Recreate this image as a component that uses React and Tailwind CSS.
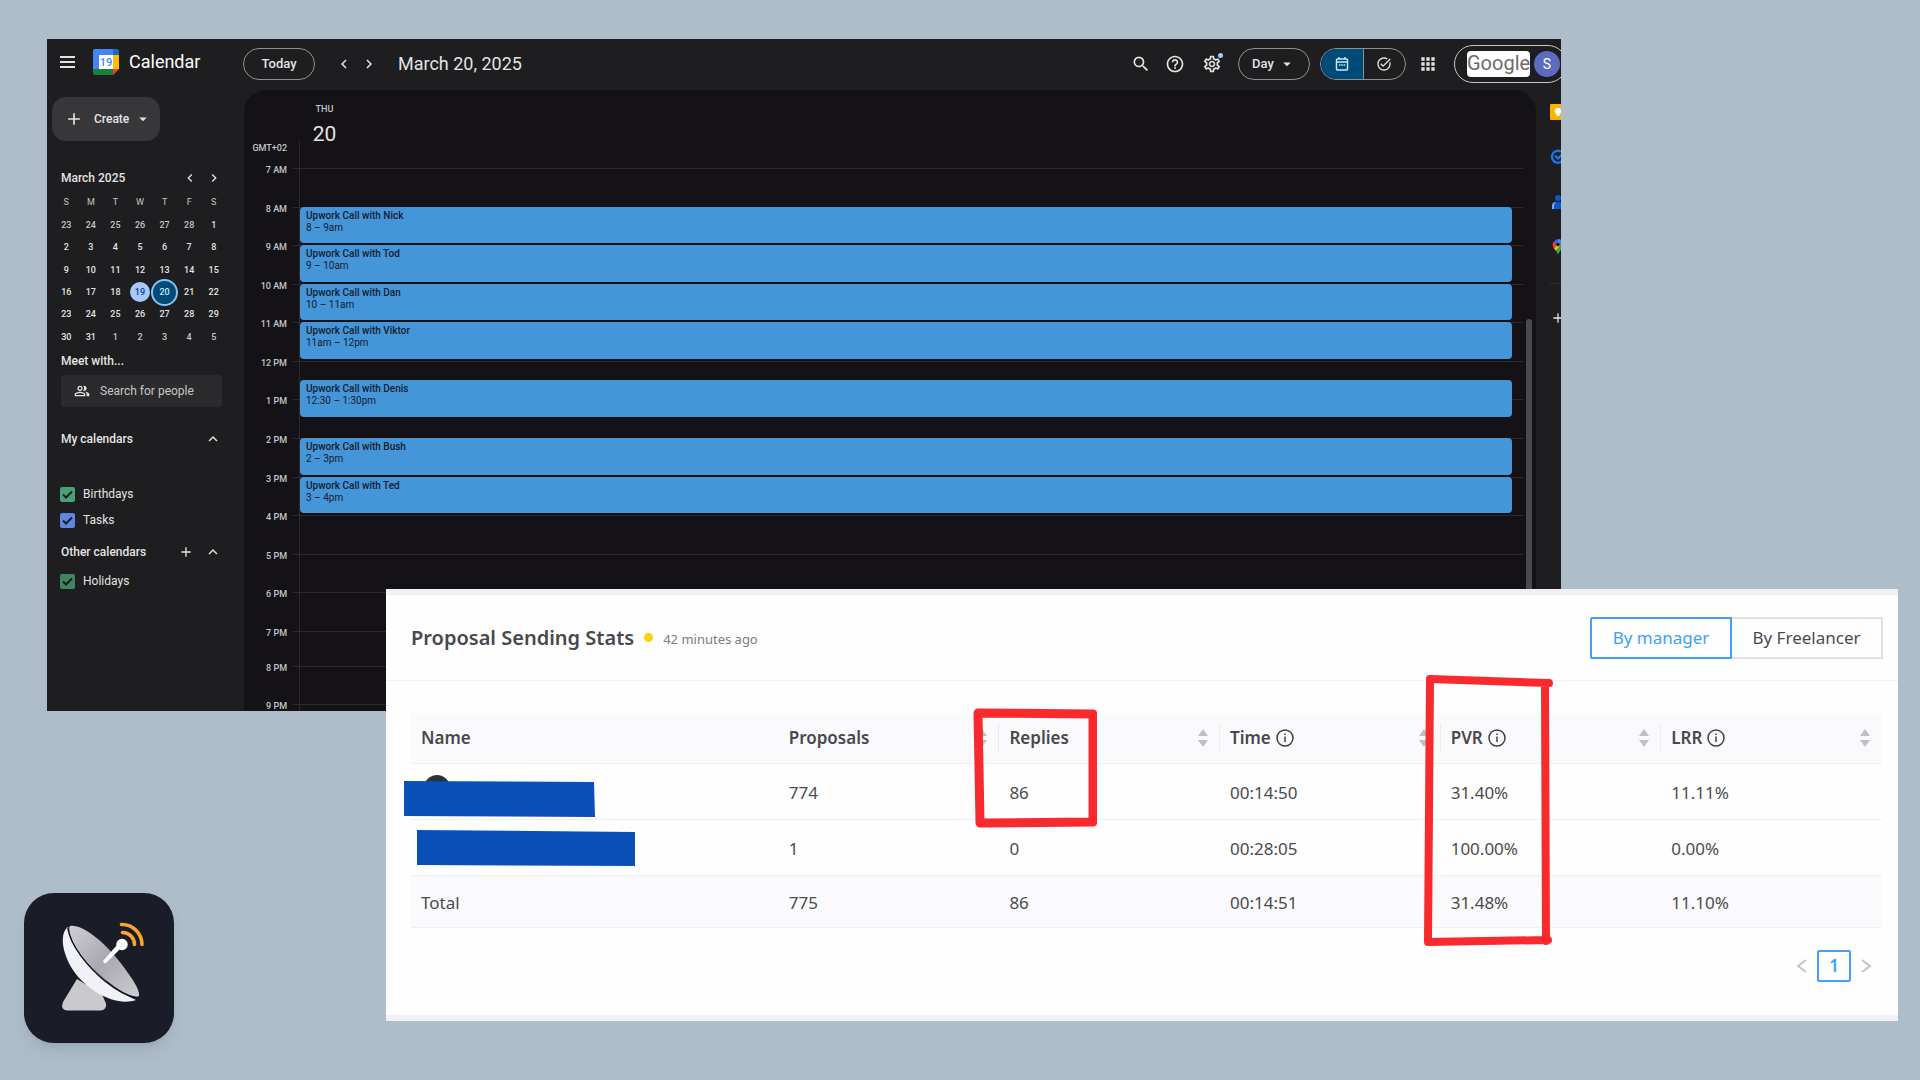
import { useState } from "react";
import {
  MdSearch,
  MdHelpOutline,
  MdOutlineSettings,
  MdApps,
  MdArrowDropDown,
  MdChevronLeft,
  MdChevronRight,
  MdExpandLess,
  MdAdd,
  MdOutlinePeopleAlt,
  MdTaskAlt,
} from "react-icons/md";

const weekdays = ["S", "M", "T", "W", "T", "F", "S"];

const days = [
  23, 24, 25, 26, 27, 28, 1,
  2, 3, 4, 5, 6, 7, 8,
  9, 10, 11, 12, 13, 14, 15,
  16, 17, 18, 19, 20, 21, 22,
  23, 24, 25, 26, 27, 28, 29,
  30, 31, 1, 2, 3, 4, 5,
];

const hours = ["7 AM", "8 AM", "9 AM", "10 AM", "11 AM", "12 PM", "1 PM", "2 PM", "3 PM", "4 PM", "5 PM", "6 PM"];

// slot = half-hour rows after 7 AM
const events = [
  { title: "Upwork Call with Nick", time: "8 – 9am", slot: "row-[3/span_2]" },
  { title: "Upwork Call with Tod", time: "9 – 10am", slot: "row-[5/span_2]" },
  { title: "Upwork Call with Dan", time: "10 – 11am", slot: "row-[7/span_2]" },
  { title: "Upwork Call with Viktor", time: "11am – 12pm", slot: "row-[9/span_2]" },
  { title: "Upwork Call with Denis", time: "12:30 – 1:30pm", slot: "row-[12/span_2]" },
  { title: "Upwork Call with Bush", time: "2 – 3pm", slot: "row-[15/span_2]" },
  { title: "Upwork Call with Ted", time: "3 – 4pm", slot: "row-[17/span_2]" },
];

const stats = [
  { proposals: "774", replies: "86", time: "00:14:50", pvr: "31.40%", lrr: "11.11%" },
  { proposals: "1", replies: "0", time: "00:28:05", pvr: "100.00%", lrr: "0.00%" },
];

function CalendarLogo() {
  return (
    <svg viewBox="0 0 26 26" className="w-[26px] h-[26px]">
      <path d="M2 0h18v6H6v14H0V2a2 2 0 0 1 2-2z" fill="#4285f4" />
      <path d="M20 0h4a2 2 0 0 1 2 2v4h-6z" fill="#1967d2" />
      <path d="M20 6h6v14h-6z" fill="#fbbc04" />
      <path d="M0 20h20v6H2a2 2 0 0 1-2-2z" fill="#188038" />
      <path d="M20 20h6l-6 6z" fill="#ea4335" />
      <path d="M6 6h14v14H6z" fill="#fff" />
      <text x="13" y="17" textAnchor="middle" fontSize="11" fontWeight="500" fill="#4285f4">19</text>
    </svg>
  );
}

function Header() {
  return (
    <header className="h-[49px] mb-[2px] flex items-center text-[#e3e3e3]">
      <div className="w-[196px] flex items-center pl-[13px] pb-1 shrink-0">
        <button aria-label="Main menu" className="w-[15px] flex flex-col gap-[3px]">
          <span className="h-[2px] bg-[#e3e3e3]" />
          <span className="h-[2px] bg-[#e3e3e3]" />
          <span className="h-[2px] bg-[#e3e3e3]" />
        </button>
        <div className="flex items-center gap-[10px] ml-[18px]">
          <CalendarLogo />
          <h1 className="text-[18px] leading-6 text-white">Calendar</h1>
        </div>
      </div>
      <button className="w-[72px] h-8 rounded-full border border-[#8e918f] text-[13px] font-medium shrink-0">Today</button>
      <button aria-label="Previous day" className="ml-5"><MdChevronLeft className="w-[18px] h-[18px]" /></button>
      <button aria-label="Next day" className="ml-[7px]"><MdChevronRight className="w-[18px] h-[18px]" /></button>
      <h2 className="ml-5 text-[18px] leading-6">March 20, 2025</h2>

      <div className="ml-auto flex items-center shrink-0">
        <button aria-label="Search"><MdSearch className="w-5 h-5" /></button>
        <button aria-label="Support" className="ml-[14px]"><MdHelpOutline className="w-5 h-5" /></button>
        <button aria-label="Settings" className="relative ml-[17px]">
          <MdOutlineSettings className="w-5 h-5" />
          <span className="absolute -top-px -right-px w-[5px] h-[5px] rounded-full bg-[#a8c7fa]" />
        </button>
        <button className="ml-4 w-[72px] h-8 rounded-full border border-[#8e918f] text-[13px] font-medium flex items-center justify-center gap-1">
          Day
          <MdArrowDropDown className="w-[18px] h-[18px]" />
        </button>
        <div className="ml-[10px] w-[86px] h-8 rounded-full border border-[#8e918f] flex overflow-hidden">
          <button aria-label="Calendar view" className="flex-1 flex items-center justify-center bg-[#004a77] text-[#c2e7ff] border-r border-[#8e918f]">
            <svg viewBox="0 0 16 16" className="w-4 h-4" fill="none" stroke="currentColor" strokeWidth="1.5">
              <rect x="2.5" y="3" width="11" height="11" rx="1" />
              <path d="M2.5 6h11M5 1v2M11 1v2" />
              <path d="M5 9h1.5M7.3 9h1.5M9.6 9h1.5" />
            </svg>
          </button>
          <button aria-label="Tasks view" className="flex-1 flex items-center justify-center">
            <MdTaskAlt className="w-4 h-4" />
          </button>
        </div>
        <button aria-label="Google apps" className="ml-3"><MdApps className="w-5 h-5" /></button>
        <div className="ml-4 -mr-[6px] w-[113px] h-[38px] rounded-full border border-[#c4c7c5] flex items-center pl-3 gap-1">
          <span className="w-[63px] h-[26px] rounded-[4px] bg-white text-[#6a6c70] text-[20px] leading-6 text-center">Google</span>
          <span className="w-[26px] h-[26px] rounded-full bg-[#5c6bc0] text-white text-[14px] leading-[26px] text-center">S</span>
        </div>
      </div>
    </header>
  );
}

function MiniCalendar() {
  return (
    <section>
      <div className="flex items-center h-6 pl-[14px] pr-[11px]">
        <h3 className="text-[12px] font-medium">March 2025</h3>
        <button aria-label="Previous month" className="ml-auto"><MdChevronLeft className="w-4 h-4" /></button>
        <button aria-label="Next month" className="ml-2"><MdChevronRight className="w-4 h-4" /></button>
      </div>
      <div className="mx-[7px] pt-[2px] grid grid-cols-7 h-6 items-center text-center text-[9px] text-[#c4c7c5]">
        {weekdays.map((d, i) => (
          <span key={i}>{d}</span>
        ))}
      </div>
      <div className="mx-[7px] grid grid-cols-7 grid-rows-6 h-[134px] place-items-center text-[9px] leading-3 font-medium">
        {days.map((d, i) => {
          const outside = i < 6 || i > 36;
          if (i === 24) {
            return <span key={i} className="w-5 h-5 rounded-full bg-[#a8c7fa] text-[#0842a0] leading-5 text-center">{d}</span>;
          }
          if (i === 25) {
            return <span key={i} className="w-[27px] h-[27px] -m-2 rounded-full border-2 border-[#7fc4f5] bg-[#004a77] text-[#c2e7ff] leading-[23px] text-center">{d}</span>;
          }
          return <span key={i} className={outside ? "text-[#c4c7c5]" : "text-[#e3e3e3]"}>{d}</span>;
        })}
      </div>
    </section>
  );
}

function CheckRow({ label, color }) {
  return (
    <label className="relative flex items-center gap-2 pl-[13px] h-[26px] text-[12px]">
      <input type="checkbox" defaultChecked className={`peer appearance-none w-[15px] h-[15px] rounded-[2px] ${color}`} />
      <svg viewBox="0 0 15 15" className="absolute left-[13px] w-[15px] h-[15px] hidden peer-checked:block" fill="none" stroke="#1e1d1f" strokeWidth="2">
        <path d="M3 7.5l3 3L12 4.5" />
      </svg>
      {label}
    </label>
  );
}

function Sidebar() {
  return (
    <aside className="w-[197px] shrink-0 text-[#e3e3e3] pt-[7px]">
      <button className="ml-[5px] w-[108px] h-11 rounded-[14px] bg-[#37373a] flex items-center text-[12px] font-medium">
        <MdAdd className="ml-3 w-5 h-5" />
        <span className="ml-[10px]">Create</span>
        <MdArrowDropDown className="ml-[5px] w-[18px] h-[18px]" />
      </button>
      <div className="pr-[11px] mt-[25px]">
        <MiniCalendar />
        <h3 className="pl-[14px] mt-[3px] text-[12px] leading-5 font-medium">Meet with...</h3>
        <div className="ml-[14px] mt-1 mr-[11px] w-[161px] h-8 rounded-[3px] bg-[#2b2a2d] flex items-center">
          <MdOutlinePeopleAlt className="ml-[13px] w-4 h-4 shrink-0" />
          <input
            type="text"
            aria-label="Search for people"
            placeholder="Search for people"
            className="ml-[10px] w-full min-w-0 bg-transparent text-[12px] placeholder-[#c4c7c5] outline-none"
          />
        </div>
        <button className="w-full flex items-center pl-[14px] pr-[11px] mt-5 h-6 text-[12px] font-medium">
          My calendars
          <MdExpandLess className="ml-auto w-[18px] h-[18px]" />
        </button>
        <div className="mt-[30px]">
          <CheckRow label="Birthdays" color="bg-[#4aa079]" />
          <CheckRow label="Tasks" color="bg-[#5c87e6]" />
        </div>
        <div className="flex items-center pl-[14px] pr-[11px] mt-[7px] h-6 text-[12px] font-medium">
          Other calendars
          <button aria-label="Add other calendars" className="ml-auto"><MdAdd className="w-4 h-4" /></button>
          <button aria-label="Collapse other calendars" className="ml-[10px]"><MdExpandLess className="w-[18px] h-[18px]" /></button>
        </div>
        <div className="mt-1">
          <CheckRow label="Holidays" color="bg-[#3f8660]" />
        </div>
      </div>
    </aside>
  );
}

function HourRow({ label, className }) {
  return (
    <div className={`flex ${className}`}>
      <span className="w-[43px] h-3 -mt-1 text-right text-[9px] leading-3 font-medium text-[#c4c7c5]">{label}</span>
      <span className="ml-[6px] mr-[13px] flex-1 border-t border-[#2b2a2e]" />
    </div>
  );
}

function DayGrid() {
  return (
    <main className="relative flex-1 min-w-0 rounded-t-[22px] bg-[#141216]">
      <div className="h-[78px] flex">
        <div className="w-[43px] flex items-end justify-end pb-[14px] text-[9px] leading-3 font-medium text-[#c4c7c5]">GMT+02</div>
        <div className="ml-[15px] pt-[13px] w-[45px] text-center">
          <p className="text-[9px] leading-3 font-medium text-[#c4c7c5]">THU</p>
          <p className="mt-[5px] text-[21px] leading-7 text-[#e3e3e3]">20</p>
        </div>
      </div>
      <div className="relative">
        <div className="grid grid-rows-12 h-[463px]">
          {hours.map((h) => (
            <HourRow key={h} label={h} className="" />
          ))}
        </div>
        <HourRow label="7 PM" className="h-[35px]" />
        <HourRow label="8 PM" className="h-[38px]" />
        <HourRow label="9 PM" className="h-[7px]" />

        <span className="absolute left-[55px] -top-[27px] bottom-0 w-px bg-[#2b2a2e]" />

        {/* Events */}
        <div className="absolute top-0 left-14 right-6 h-[463px] grid grid-rows-[repeat(24,1fr)]">
          {events.map((e) => (
            <article key={e.title} className={`${e.slot} mb-[2px] min-h-0 overflow-hidden rounded-[4px] bg-[#4595d9] pl-[6px] pt-[3px] text-[10px] leading-3 text-[#14202e]`}>
              <h4 className="font-medium">{e.title}</h4>
              <p>{e.time}</p>
            </article>
          ))}
        </div>
        <span className="absolute right-1 top-[151px] bottom-0 w-[6px] rounded-t-full bg-[#4a494d]" />
      </div>
    </main>
  );
}

function SideRail() {
  return (
    <nav className="w-[25px] shrink-0 pl-[14px] pt-[14px] flex flex-col overflow-hidden">
      <svg viewBox="0 0 16 16" className="w-4 h-4 shrink-0">
        <rect width="16" height="16" rx="1" fill="#fbb500" />
        <circle cx="8" cy="7" r="3.2" fill="#fff" />
        <path d="M6.5 9h3v3h-3z" fill="#fff" />
      </svg>
      <svg viewBox="0 0 16 16" className="w-4 h-4 mt-[29px] shrink-0" fill="none" stroke="#1a73e8" strokeWidth="2.4">
        <path d="M11 2.600A6 6 0 1 0 14 8" />
        <path d="M5 6.500l3 3 6-6" />
      </svg>
      <svg viewBox="0 0 16 16" className="w-4 h-4 mt-[29px] shrink-0">
        <circle cx="8" cy="4" r="3" fill="#0b57d0" />
        <path d="M2 15v-3a4 4 0 0 1 4-4v7z" fill="#7cacf8" />
        <path d="M4 15v-3a4 4 0 0 1 4-4h4v7z" fill="#0b57d0" />
      </svg>
      <svg viewBox="0 0 16 16" className="w-4 h-4 mt-[29px] shrink-0">
        <path d="M8 0a5.5 5.5 0 0 1 5.3 4L8 6z" fill="#4285f4" />
        <path d="M8 0v6L3.8 2.5A5.500 5.500 0 0 1 8 0z" fill="#1a73e8" />
        <path d="M3.800 2.500L8 6 4 9.500A6 6 0 0 1 3.800 2.500z" fill="#ea4335" />
        <path d="M4 9.500L9 4l2 2-5 6z" fill="#fbbc04" />
        <path d="M13.300 4c1 4-3 6-5.300 12C7.500 14 6.500 12.500 5.700 11.500z" fill="#34a853" />
        <circle cx="8" cy="5.500" r="1.800" fill="#141216" />
      </svg>
      <span className="mt-7 w-full h-px bg-[#2e2d30] shrink-0" />
      <button aria-label="Get add-ons" className="mt-[26px] w-4 shrink-0 text-[#e3e3e3]"><MdAdd className="w-4 h-4" /></button>
    </nav>
  );
}

function CalendarWindow() {
  return (
    <div className="absolute top-[39px] left-[47px] right-[359px] overflow-hidden bg-[#1e1d1f] font-['Roboto',sans-serif]">
      <Header />
      <div className="flex">
        <Sidebar />
        <DayGrid />
        <SideRail />
      </div>
    </div>
  );
}

function InfoIcon() {
  return (
    <svg viewBox="0 0 18 18" className="w-[18px] h-[18px] ml-[5px]" fill="none" stroke="#3f3f44" strokeWidth="1.5">
      <circle cx="9" cy="9" r="8" />
      <path d="M9 7.500v5.500M9 4.500v1.600" />
    </svg>
  );
}

function SortHeader({ label, info, divider, children }) {
  return (
    <th scope="col" className="relative w-[15%] px-[10px] font-semibold text-left bg-[#faf9fc] border-b border-[#f0f0f2]">
      <div className="flex items-center">
        {label}
        {info && <InfoIcon />}
        <button aria-label={`Sort by ${label}`} className="ml-auto mr-[2px]">
          <svg viewBox="0 0 10 18" className="w-[10px] h-[18px]" fill="#bfbfc4">
            <path d="M5 0l5 7H0zM5 18l5-7H0z" />
          </svg>
        </button>
      </div>
      {divider && <span className="absolute right-0 top-[10px] w-px h-[30px] bg-[#ececf0]" />}
      {children}
    </th>
  );
}

function StatsTable() {
  return (
    <table className="w-full table-fixed border-collapse text-[17px] text-[#4a4a50]">
      <thead>
        <tr className="h-[50px] text-[#48484d]">
          <th scope="col" className="w-[25%] px-[10px] text-left font-semibold bg-[#faf9fc] border-b border-[#f0f0f2]">Name</th>
          <SortHeader label="Proposals" divider />
          <SortHeader label="Replies" divider>
            <svg viewBox="0 0 124 120" className="absolute z-10 -left-[26px] -top-[5px] w-[124px] h-[120px] max-w-none" fill="none" stroke="#f92a2d" strokeWidth="9" strokeLinejoin="round" strokeLinecap="round">
              <path d="M5 5l115 1v108l-113 1z" />
            </svg>
          </SortHeader>
          <SortHeader label="Time" info divider />
          <SortHeader label="PVR" info divider>
            <svg viewBox="0 0 130 274" className="absolute z-10 -left-[18px] -top-[39px] w-[130px] h-[274px] max-w-none" fill="none" stroke="#f92a2d" strokeWidth="8" strokeLinejoin="round" strokeLinecap="round">
              <path d="M7 5l119 4M122 10l1 257M125 266l-120 2M5 268L7 5" />
            </svg>
          </SortHeader>
          <SortHeader label="LRR" info />
        </tr>
      </thead>
      <tbody>
        {stats.map((row, i) => (
          <tr key={row.proposals} className="h-14 border-b border-[#f0f0f2]">
            <td className="relative px-[10px]">
              {i === 0 ? (
                <svg viewBox="0 0 194 48" className="absolute -left-2 top-[10px] w-[194px] h-[48px]">
                  <circle cx="34" cy="14" r="13" fill="#2c3336" />
                  <path d="M1 7l190 1 1 35-191-1z" fill="#0a50b9" />
                </svg>
              ) : (
                <svg viewBox="0 0 220 40" className="absolute left-[5px] top-2 w-[220px] h-10">
                  <path d="M1 2l218 2v34l-218-1z" fill="#0a50b9" />
                </svg>
              )}
            </td>
            <td className="px-[10px] pt-[3px]">{row.proposals}</td>
            <td className="px-[10px] pt-[3px]">{row.replies}</td>
            <td className="px-[10px] pt-[3px]">{row.time}</td>
            <td className="px-[10px] pt-[3px]">{row.pvr}</td>
            <td className="px-[10px] pt-[3px]">{row.lrr}</td>
          </tr>
        ))}
      </tbody>
      <tfoot>
        <tr className="h-[52px] bg-[#faf9fc] border-b border-[#f0f0f2]">
          <td className="px-[10px] pt-[3px]">Total</td>
          <td className="px-[10px] pt-[3px]">775</td>
          <td className="px-[10px] pt-[3px]">86</td>
          <td className="px-[10px] pt-[3px]">00:14:51</td>
          <td className="px-[10px] pt-[3px]">31.48%</td>
          <td className="px-[10px] pt-[3px]">11.10%</td>
        </tr>
      </tfoot>
    </table>
  );
}

function StatsCard() {
  const [view, setView] = useState("manager");
  const active = "border-[#40a0fc] text-[#40a0fc]";
  const idle = "border-[#e2e2e6] text-[#4a4a50]";

  return (
    <div className="absolute top-[589px] left-[386px] right-[22px] bg-[#fefefe] border-y-[6px] border-[#f1f1f5] font-['Noto_Sans',sans-serif]">
      <div className="h-[86px] flex items-center pl-[25px] pr-[15px] border-b border-[#f1f0f4]">
        <h2 className="text-[20px] font-semibold text-[#48484d]">Proposal Sending Stats</h2>
        <span className="ml-[10px] w-[9px] h-[9px] rounded-full bg-[#fdd10a]" />
        <span className="ml-[10px] pt-1 text-[13px] text-[#7c7c82]">42 minutes ago</span>
        <div className="ml-auto flex h-[42px] text-[17px]">
          <button onClick={() => setView("manager")} className={`w-[142px] border-2 rounded-l-[2px] ${view === "manager" ? active : idle}`}>
            By manager
          </button>
          <button onClick={() => setView("freelancer")} className={`w-[151px] border-2 border-l-0 rounded-r-[2px] ${view === "freelancer" ? active : idle}`}>
            By Freelancer
          </button>
        </div>
      </div>
      <div className="pt-8 pl-[25px] pr-4">
        <StatsTable />
        <div className="mt-[22px] mb-[33px] mr-[10px] flex items-center justify-end gap-[9px] text-[#c4c4c8]">
          <button aria-label="Previous page">
            <svg viewBox="0 0 12 14" className="w-3 h-[14px]" fill="none" stroke="currentColor" strokeWidth="2"><path d="M10 1L2 7l8 6" /></svg>
          </button>
          <button className="w-[34px] h-8 border-2 border-[#40a0fc] rounded-[2px] text-[17px] leading-7 font-semibold text-[#40a0fc]">1</button>
          <button aria-label="Next page">
            <svg viewBox="0 0 12 14" className="w-3 h-[14px]" fill="none" stroke="currentColor" strokeWidth="2"><path d="M2 1l8 6-8 6" /></svg>
          </button>
        </div>
      </div>
    </div>
  );
}

function DishBadge() {
  return (
    <div className="absolute left-6 bottom-[37px] w-[150px] h-[150px] rounded-[30px] bg-[#1a1c28] shadow-lg shadow-slate-500/20">
      <svg viewBox="0 0 150 150" className="w-full h-full">
        <defs>
          <linearGradient id="bowl" x1="0" y1="0" x2="1" y2="1">
            <stop offset="0" stopColor="#cfced3" />
            <stop offset="0.5" stopColor="#a9a8b0" />
            <stop offset="1" stopColor="#cfced3" />
          </linearGradient>
        </defs>
        <path d="M53 86L39 109q-3 8 4 8.500h34q6-1 5-7l-4-9z" fill="#c9c9ce" />
        <path d="M44 34C36 40 37 58 49 77C63 98 92 114 112 107C90 98 58 72 44 34z" fill="#f1f1f8" />
        <path d="M46 33C58 31 78 47 95 68C106 82 116 96 115 103C108 108 80 88 66 72C52 56 42 37 46 33z" fill="url(#bowl)" />
        <path d="M44 35C46 52 64 74 81 88C92 97 103 103 113 105" fill="none" stroke="#0e0f16" strokeWidth="1.600" />
        <path d="M79 68l1 2q1.500 1 3-1L96 56l-3-4z" fill="#fff" />
        <circle cx="98" cy="51.500" r="5.700" fill="#fff" />
        <path d="M98.500 39.500a12 12 0 0 1 12 12M97.500 31.500a20 20 0 0 1 20.500 20" fill="none" stroke="#fba52f" strokeWidth="3.600" strokeLinecap="round" />
      </svg>
    </div>
  );
}

export default function App() {
  return (
    <div className="relative min-h-screen overflow-hidden bg-[#adbdca]">
      <CalendarWindow />
      <StatsCard />
      <DishBadge />
    </div>
  );
}
